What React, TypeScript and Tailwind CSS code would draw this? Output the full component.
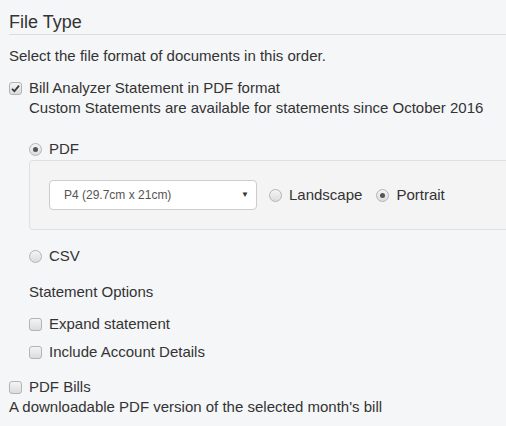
import React from 'react';

const Checkbox: React.FC<{ checked?: boolean }> = ({ checked }) => (
  <span className="inline-flex h-[13px] w-[13px] shrink-0 items-center justify-center rounded-[3px] border border-[#b4b4b4] bg-gradient-to-b from-[#f4f4f4] to-[#dcdcdc]">
    {checked && (
      <svg width="9" height="9" viewBox="0 0 9 9">
        <path d="M1 4.8 L3.4 7.2 L8 1.6" fill="none" stroke="#3a3a3a" strokeWidth="1.8" />
      </svg>
    )}
  </span>
);

const Radio: React.FC<{ checked?: boolean }> = ({ checked }) => (
  <span className="inline-flex h-[13px] w-[13px] shrink-0 items-center justify-center rounded-full border border-[#b4b4b4] bg-gradient-to-b from-[#f4f4f4] to-[#dcdcdc]">
    {checked && <span className="h-[5px] w-[5px] rounded-full bg-[#555]" />}
  </span>
);

const App: React.FC = () => {
  return (
    <div
      className="min-h-[426px] w-[506px] overflow-hidden bg-[#f5f6f8] pl-[9px] text-[15px] leading-[20px] text-[#333]"
      style={{ fontFamily: '"Liberation Sans", Arial, sans-serif' }}
    >
      {/* Header */}
      <h2 className="mt-[12px] border-b border-[#dcdcdc] pb-[1px] text-[18px] leading-[21px] font-normal text-[#333]">
        File Type
      </h2>

      <p className="mt-[11px]">Select the file format of documents in this order.</p>

      {/* PDF statement */}
      <div className="mt-[12px] flex">
        <div className="flex h-[20px] w-[20px] items-center">
          <Checkbox checked />
        </div>
        <div>
          <div>Bill Analyzer Statement in PDF format</div>
          <div>Custom Statements are available for statements since October 2016</div>
        </div>
      </div>

      <div className="pl-[20px]">
        <label className="mt-[21px] flex items-center gap-[7px]">
          <Radio checked />
          <span>PDF</span>
        </label>

        <div className="mt-[1px] -mr-[10px] flex items-center rounded-[4px] border border-[#e0e0e0] bg-[#f4f4f4] py-[19px] pl-[19px]">
          <div className="flex h-[30px] w-[208px] items-center justify-between rounded-[4px] border border-[#cccccc] bg-white pr-[7px] pl-[14px] text-[12px] text-[#555]">
            <span>P4 (29.7cm x 21cm)</span>
            <span className="text-[8px] text-[#333]">▼</span>
          </div>
          <label className="ml-[12px] flex items-center gap-[7px]">
            <Radio />
            <span>Landscape</span>
          </label>
          <label className="ml-[14px] flex items-center gap-[7px]">
            <Radio checked />
            <span>Portrait</span>
          </label>
        </div>

        <label className="mt-[16px] flex items-center gap-[7px]">
          <Radio />
          <span>CSV</span>
        </label>

        <div className="mt-[16px]">Statement Options</div>

        <label className="mt-[12px] flex items-center gap-[7px]">
          <Checkbox />
          <span>Expand statement</span>
        </label>
        <label className="mt-[8px] flex items-center gap-[7px]">
          <Checkbox />
          <span>Include Account Details</span>
        </label>
      </div>

      {/* PDF bills */}
      <label className="mt-[15px] flex items-center gap-[7px]">
        <Checkbox />
        <span>PDF Bills</span>
      </label>
      <div>A downloadable PDF version of the selected month's bill</div>
    </div>
  );
};

export default App;
